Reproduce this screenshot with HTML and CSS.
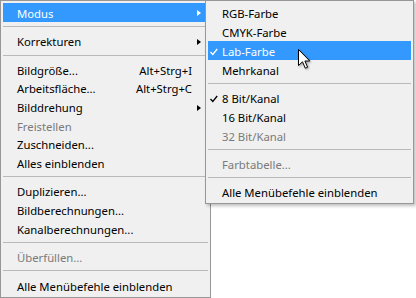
FILE: index.html
```html
<!DOCTYPE html>
<html lang="de">
<head>
<meta charset="UTF-8">
<meta name="viewport" content="width=device-width, initial-scale=1.0">
<title>Bild-Menü</title>
<link rel="stylesheet" href="styles.css">
</head>
<body>
<div class="screen">
  <div class="menu main">
    <div class="item active sub"><span class="check"></span><span class="label">Modus</span><span class="arrow"></span></div>
    <div class="sep"></div>
    <div class="item sub"><span class="check"></span><span class="label">Korrekturen</span><span class="arrow"></span></div>
    <div class="sep"></div>
    <div class="item"><span class="check"></span><span class="label">Bildgröße...</span><span class="key">Alt+Strg+I</span><span class="arrow"></span></div>
    <div class="item"><span class="check"></span><span class="label">Arbeitsfläche...</span><span class="key">Alt+Strg+C</span><span class="arrow"></span></div>
    <div class="item sub"><span class="check"></span><span class="label">Bilddrehung</span><span class="arrow"></span></div>
    <div class="item off"><span class="check"></span><span class="label">Freistellen</span><span class="arrow"></span></div>
    <div class="item"><span class="check"></span><span class="label">Zuschneiden...</span><span class="arrow"></span></div>
    <div class="item"><span class="check"></span><span class="label">Alles einblenden</span><span class="arrow"></span></div>
    <div class="sep"></div>
    <div class="item"><span class="check"></span><span class="label">Duplizieren...</span><span class="arrow"></span></div>
    <div class="item"><span class="check"></span><span class="label">Bildberechnungen...</span><span class="arrow"></span></div>
    <div class="item"><span class="check"></span><span class="label">Kanalberechnungen...</span><span class="arrow"></span></div>
    <div class="sep"></div>
    <div class="item off"><span class="check"></span><span class="label">Überfüllen...</span><span class="arrow"></span></div>
    <div class="sep"></div>
    <div class="item"><span class="check"></span><span class="label">Alle Menübefehle einblenden</span><span class="arrow"></span></div>
  </div>

  <div class="menu popup">
    <div class="item"><span class="check"></span><span class="label">RGB-Farbe</span><span class="arrow"></span></div>
    <div class="item"><span class="check"></span><span class="label">CMYK-Farbe</span><span class="arrow"></span></div>
    <div class="item active checked"><span class="check"><svg width="8" height="8" viewBox="0 0 8 8"><polyline points="0.5,4 2.8,6.5 7.2,1" fill="none" stroke="currentColor" stroke-width="1.3"/></svg></span><span class="label">Lab-Farbe</span><span class="arrow"></span></div>
    <div class="item"><span class="check"></span><span class="label">Mehrkanal</span><span class="arrow"></span></div>
    <div class="sep"></div>
    <div class="item checked"><span class="check"><svg width="8" height="8" viewBox="0 0 8 8"><polyline points="0.5,4 2.8,6.5 7.2,1" fill="none" stroke="currentColor" stroke-width="1.3"/></svg></span><span class="label">8 Bit/Kanal</span><span class="arrow"></span></div>
    <div class="item"><span class="check"></span><span class="label">16 Bit/Kanal</span><span class="arrow"></span></div>
    <div class="item off"><span class="check"></span><span class="label">32 Bit/Kanal</span><span class="arrow"></span></div>
    <div class="sep"></div>
    <div class="item off"><span class="check"></span><span class="label">Farbtabelle...</span><span class="arrow"></span></div>
    <div class="sep"></div>
    <div class="item"><span class="check"></span><span class="label">Alle Menübefehle einblenden</span><span class="arrow"></span></div>
  </div>

  <svg class="cursor" width="14" height="21" viewBox="0 0 14 21">
    <polygon points="0.5,0.5 0.5,16.5 4.5,12.8 7.3,19.2 9.6,18.2 6.9,12 11.8,12" fill="#fff" stroke="#000" stroke-width="1" stroke-linejoin="miter"/>
  </svg>
</div>
</body>
</html>
```

FILE: styles.css
```css
body {
  margin: 0;
  background: #ffffff;
  font-family: "Noto Sans", "Open Sans", sans-serif;
  font-size: 11.3px;
  color: #000000;
}

.screen {
  position: relative;
  width: 416px;
  height: 298px;
  overflow: hidden;
}

.menu {
  box-sizing: border-box;
  background: #f0f0f0;
  border: 1px solid #979797;
  padding: 2px;
}

.main {
  width: 211px;
}

.popup {
  position: absolute;
  left: 205px;
  top: 0;
  width: 209px;
  box-shadow: 2px 2px 3px rgba(0, 0, 0, 0.25);
}

.item {
  display: flex;
  align-items: center;
  box-sizing: border-box;
  height: 18.67px;
  padding-top: 2px;
  white-space: nowrap;
}

.popup .item {
  height: 19px;
}

.item.active {
  background: #3399ff;
  color: #ffffff;
}

.item.off {
  color: #7a7a7a;
}

.check {
  width: 14px;
  flex: none;
  display: flex;
  align-items: center;
  padding-left: 2px;
  box-sizing: border-box;
}

.check svg {
  display: block;
}

.label {
  flex: 1;
}

.key {
  flex: none;
}

.arrow {
  width: 16px;
  flex: none;
  display: flex;
  align-items: center;
}

.sub .arrow::before {
  content: "";
  margin-left: 5px;
  border-left: 4px solid currentColor;
  border-top: 3.5px solid transparent;
  border-bottom: 3.5px solid transparent;
}

.sep {
  height: 9.8px;
  display: flex;
  align-items: center;
}

.popup .sep {
  height: 9px;
}

.sep::before {
  content: "";
  flex: 1;
  border-top: 1px solid #b9b9b9;
}

.cursor {
  position: absolute;
  left: 298px;
  top: 49px;
  filter: drop-shadow(1px 1px 1px rgba(0, 0, 0, 0.35));
}
```
